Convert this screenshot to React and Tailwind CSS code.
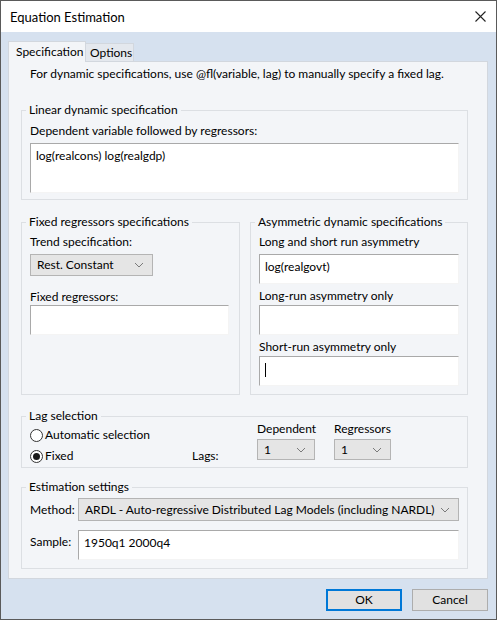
import React from "react";

const font = { fontFamily: 'Lato, "Noto Sans", sans-serif' };

function Chevron() {
  return (
    <svg width="10" height="6" viewBox="0 0 10 6" className="shrink-0">
      <path d="M1 1 L5 5 L9 1" fill="none" stroke="#7a7a7a" strokeWidth="1" />
    </svg>
  );
}

function Combo({ value, className }) {
  return (
    <div className={"flex items-center justify-between bg-[#e5e5e5] border border-[#b4b4b4] pl-[6px] pr-[8px] whitespace-nowrap " + className}>
      <span>{value}</span>
      <Chevron />
    </div>
  );
}

function TextBox({ value, className, caret }) {
  return (
    <div className={"bg-white border-t border-l border-[#a9a9a9] border-r-[#f4f4f4] border-b-[#f4f4f4] border-r border-b pl-[5px] pt-[4px] " + className}>
      {value}
      {caret && <span className="inline-block w-px h-[14px] bg-black align-middle" />}
    </div>
  );
}

function Group({ title, className, children }) {
  return (
    <fieldset className={"border border-[#dcdfe3] pl-[8px] pr-[8px] " + className}>
      <legend className="-ml-[4px] px-[3px] leading-[16px]">{title}</legend>
      {children}
    </fieldset>
  );
}

function Radio({ checked, label }) {
  return (
    <div className="flex items-center h-[16px]">
      <div className="w-[13px] h-[13px] rounded-full border border-[#333] bg-white flex items-center justify-center mr-[2px]">
        {checked && <div className="w-[7px] h-[7px] rounded-full bg-[#1a1a1a]" />}
      </div>
      <span>{label}</span>
    </div>
  );
}

export default function App() {
  return (
    <div className="w-[497px] h-[620px] bg-[#d6e1ef] border border-[#5a5a5a] flex flex-col text-[12px] text-black leading-[16px] whitespace-nowrap overflow-hidden" style={font}>
      <div className="h-[31px] bg-white flex items-center justify-between pl-[9px] pr-[10px] shrink-0">
        <span className="text-[13px]">Equation Estimation</span>
        <svg width="11" height="11" viewBox="0 0 11 11">
          <path d="M0.5 0.5 L10.5 10.5 M10.5 0.5 L0.5 10.5" stroke="#222" strokeWidth="1.1" />
        </svg>
      </div>
      <div className="pl-[7px] pr-[8px] pt-[8px] flex flex-col">
        <div className="flex items-end h-[21px]">
          <div className="h-[21px] w-[78px] bg-[#f3f5f8] border border-b-0 border-[#d2d7de] flex items-center pl-[7px] relative z-10 -mb-px">
            Specification
          </div>
          <div className="h-[18px] w-[48px] bg-[#e4e8ee] border border-l-0 border-b-0 border-[#d2d7de] flex items-center pl-[4px]">
            Options
          </div>
        </div>
        <div className="w-[480px] h-[518px] bg-[#f3f5f8] border border-[#d2d7de] pl-[12px] pr-[19px] flex flex-col">
          <div className="mt-[4px] pl-[9px]">For dynamic specifications, use @fl(variable, lag) to manually specify a fixed lag.</div>
          <Group title="Linear dynamic specification" className="mt-[20px] pb-[6px]">
            <div className="mt-[5px]">Dependent variable followed by regressors:</div>
            <TextBox value="log(realcons) log(realgdp)" className="mt-[4px] h-[50px]" />
          </Group>
          <div className="flex gap-[10px] mt-[14px] h-[181px]">
            <Group title="Fixed regressors specifications" className="w-[219px] pr-[10px]">
              <div className="mt-[4px]">Trend specification:</div>
              <Combo value="Rest. Constant" className="mt-[4px] h-[22px] w-[123px]" />
              <div className="mt-[13px]">Fixed regressors:</div>
              <TextBox value="" className="h-[30px]" />
            </Group>
            <Group title="Asymmetric dynamic specifications" className="flex-1 pl-[7px]">
              <div className="mt-[4px]">Long and short run asymmetry</div>
              <TextBox value="log(realgovt)" className="mt-[4px] h-[30px]" />
              <div className="mt-[4px]">Long-run asymmetry only</div>
              <TextBox value="" className="mt-[1px] h-[30px]" />
              <div className="mt-[4px]">Short-run asymmetry only</div>
              <TextBox value="" caret className="mt-[1px] h-[30px]" />
            </Group>
          </div>
          <Group title="Lag selection" className="mt-[13px] pb-[3px]">
            <div className="flex -mt-[3px]">
              <div className="flex flex-col pt-[6px] gap-[5px] w-[162px]">
                <Radio label="Automatic selection" />
                <Radio checked label="Fixed" />
              </div>
              <div className="self-end h-[16px] w-[65px]">Lags:</div>
              <div className="flex flex-col w-[77px]">
                <div>Dependent</div>
                <Combo value="1" className="mt-[2px] h-[21px] w-[58px]" />
              </div>
              <div className="flex flex-col">
                <div>Regressors</div>
                <Combo value="1" className="mt-[2px] h-[21px] w-[57px]" />
              </div>
            </div>
          </Group>
          <Group title="Estimation settings" className="mt-[11px] pb-[8px]">
            <div className="flex items-center mt-[3px]">
              <div className="w-[48px]">Method:</div>
              <Combo value="ARDL - Auto-regressive Distributed Lag Models (including NARDL)" className="h-[23px] flex-1" />
            </div>
            <div className="flex mt-[9px]">
              <div className="w-[48px] pt-[4px]">Sample:</div>
              <TextBox value="1950q1 2000q4" className="h-[30px] flex-1" />
            </div>
          </Group>
        </div>
        <div className="flex justify-end gap-[10px] mt-[10px]">
          <div className="w-[76px] h-[22px] border-2 border-[#0078d7] bg-[#e1e1e1] flex items-center justify-center">OK</div>
          <div className="w-[76px] h-[22px] border border-[#adadad] bg-[#e1e1e1] flex items-center justify-center">Cancel</div>
        </div>
      </div>
    </div>
  );
}
